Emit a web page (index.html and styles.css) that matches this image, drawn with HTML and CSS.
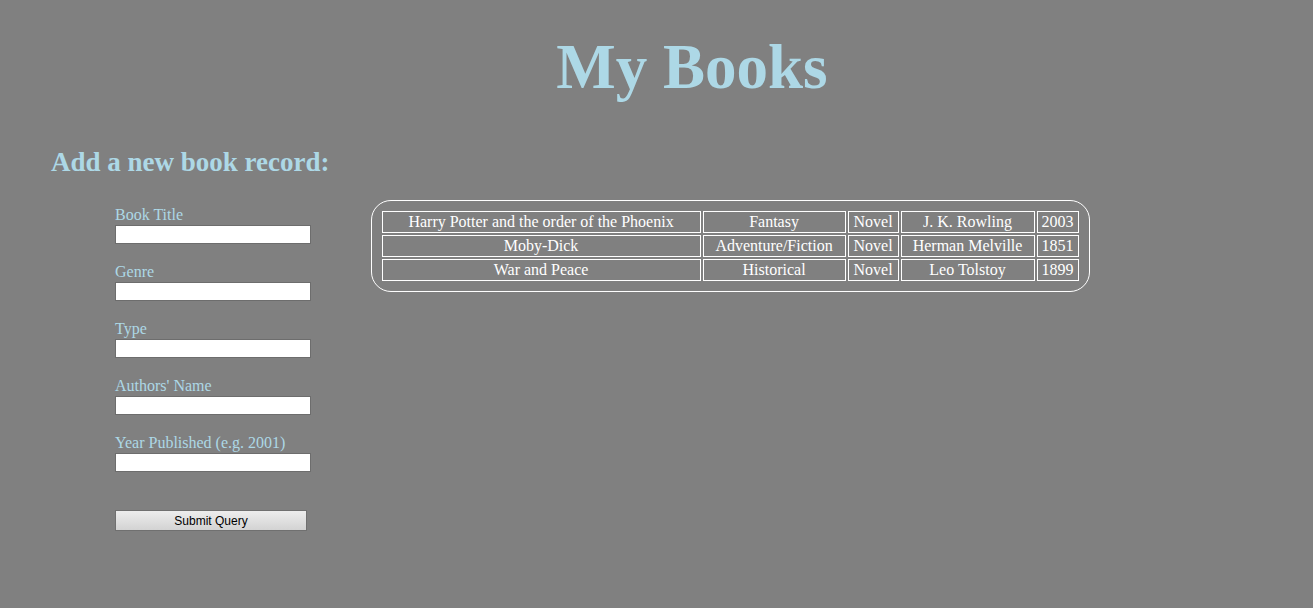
FILE: index.html
```
<!DOCTYPE html>
<html lang="en">
<head>
<meta charset="utf-8">
<title>My Books</title>
<link rel="stylesheet" href="styles.css">
</head>
<body>
<h1 class="title">My Books</h1>
<main class="content">
  <section class="entry">
    <h2 class="entry-heading">Add a new book record:</h2>
    <form class="book-form">
      <div class="field"><label for="book">Book Title</label><input type="text" id="book" name="book"></div>
      <div class="field"><label for="genre">Genre</label><input type="text" id="genre" name="genre"></div>
      <div class="field"><label for="type">Type</label><input type="text" id="type" name="type"></div>
      <div class="field"><label for="author">Authors' Name</label><input type="text" id="author" name="author"></div>
      <div class="field"><label for="year">Year Published (e.g. 2001)</label><input type="text" id="year" name="year"></div>
      <button class="submit" type="submit">Submit Query</button>
    </form>
  </section>
  <table class="books">
    <colgroup><col class="col-title"><col class="col-genre"><col class="col-type"><col class="col-author"><col></colgroup>
    <tbody>
      <tr><td>Harry Potter and the order of the Phoenix</td><td>Fantasy</td><td>Novel</td><td>J. K. Rowling</td><td>2003</td></tr>
      <tr><td>Moby-Dick</td><td>Adventure/Fiction</td><td>Novel</td><td>Herman Melville</td><td>1851</td></tr>
      <tr><td>War and Peace</td><td>Historical</td><td>Novel</td><td>Leo Tolstoy</td><td>1899</td></tr>
    </tbody>
  </table>
</main>
</body>
</html>
```
FILE: styles.css
```
* { box-sizing: border-box; }

body {
  margin: 0;
  background: #808080;
  color: lightblue;
  font-family: "Times New Roman", "Liberation Serif", serif;
  font-size: 16px;
  line-height: 18px;
}

.title {
  margin: 0;
  padding: 31px 0 0 71px;
  font-size: 63px;
  line-height: 72px;
  text-align: center;
}

.content {
  display: flex;
  align-items: flex-start;
  gap: 41px;
  padding: 44px 0 40px 51px;
}

.entry-heading {
  margin: 0 0 28px;
  font-size: 27px;
  line-height: 30px;
  white-space: nowrap;
}

.book-form {
  display: flex;
  flex-direction: column;
  gap: 18px;
  width: 260px;
  padding-left: 64px;
}

.field {
  display: flex;
  flex-direction: column;
}

.field label {
  line-height: 20px;
}

.field input {
  width: 100%;
  height: 19px;
  padding: 0 2px;
  border: 1px solid #6d6d6d;
  border-radius: 0;
  background: #fff;
}

.submit {
  width: 192px;
  height: 21px;
  margin-top: 20px;
  padding: 0;
  border: 1px solid #707070;
  border-radius: 0;
  background: linear-gradient(#ededed, #d3d3d3);
  color: #000;
  font: 12px/18px Arial, "Liberation Sans", sans-serif;
}

.books {
  margin-top: 53px;
  padding: 8px;
  border: 1px solid #fff;
  border-radius: 20px;
  border-spacing: 2px;
  color: #fff;
  text-align: center;
  white-space: nowrap;
}

.books td {
  padding: 1px 4px;
  border: 1px solid #fff;
}

.col-title { width: 319px; }
.col-genre { width: 143px; }
.col-type { width: 51px; }
.col-author { width: 134px; }
```
